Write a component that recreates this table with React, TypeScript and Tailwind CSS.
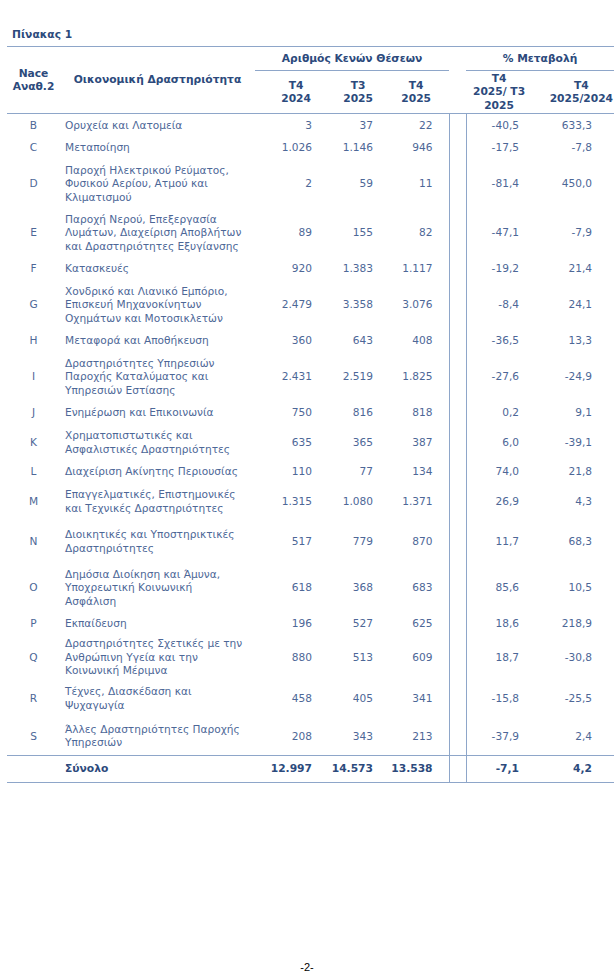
import React from "react";

type Row = {
  code: string;
  lines: string[];
  a: string;
  b: string;
  c: string;
  d: string;
  e: string;
  h: string;
};

const rows: Row[] = [
  { code: "B", lines: ["Ορυχεία και Λατομεία"], a: "3", b: "37", c: "22", d: "-40,5", e: "633,3", h: "h-[23px]" },
  { code: "C", lines: ["Μεταποίηση"], a: "1.026", b: "1.146", c: "946", d: "-17,5", e: "-7,8", h: "h-[23px]" },
  { code: "D", lines: ["Παροχή Ηλεκτρικού Ρεύματος,", "Φυσικού Αερίου, Ατμού και", "Κλιματισμού"], a: "2", b: "59", c: "11", d: "-81,4", e: "450,0", h: "h-[49px]" },
  { code: "E", lines: ["Παροχή Νερού, Επεξεργασία", "Λυμάτων, Διαχείριση Αποβλήτων", "και Δραστηριότητες Εξυγίανσης"], a: "89", b: "155", c: "82", d: "-47,1", e: "-7,9", h: "h-[49px]" },
  { code: "F", lines: ["Κατασκευές"], a: "920", b: "1.383", c: "1.117", d: "-19,2", e: "21,4", h: "h-[23px]" },
  { code: "G", lines: ["Χονδρικό και Λιανικό Εμπόριο,", "Επισκευή Μηχανοκίνητων", "Οχημάτων και Μοτοσικλετών"], a: "2.479", b: "3.358", c: "3.076", d: "-8,4", e: "24,1", h: "h-[49px]" },
  { code: "H", lines: ["Μεταφορά και Αποθήκευση"], a: "360", b: "643", c: "408", d: "-36,5", e: "13,3", h: "h-[23px]" },
  { code: "I", lines: ["Δραστηριότητες Υπηρεσιών", "Παροχής Καταλύματος και", "Υπηρεσιών Εστίασης"], a: "2.431", b: "2.519", c: "1.825", d: "-27,6", e: "-24,9", h: "h-[49px]" },
  { code: "J", lines: ["Ενημέρωση και Επικοινωνία"], a: "750", b: "816", c: "818", d: "0,2", e: "9,1", h: "h-[23px]" },
  { code: "K", lines: ["Χρηματοπιστωτικές και", "Ασφαλιστικές Δραστηριότητες"], a: "635", b: "365", c: "387", d: "6,0", e: "-39,1", h: "h-[36px]" },
  { code: "L", lines: ["Διαχείριση Ακίνητης Περιουσίας"], a: "110", b: "77", c: "134", d: "74,0", e: "21,8", h: "h-[23px]" },
  { code: "M", lines: ["Επαγγελματικές, Επιστημονικές", "και Τεχνικές Δραστηριότητες"], a: "1.315", b: "1.080", c: "1.371", d: "26,9", e: "4,3", h: "h-[36px]" },
  { code: "N", lines: ["Διοικητικές και Υποστηρικτικές", "Δραστηριότητες"], a: "517", b: "779", c: "870", d: "11,7", e: "68,3", h: "h-[44px]" },
  { code: "O", lines: ["Δημόσια Διοίκηση και Άμυνα,", "Υποχρεωτική Κοινωνική", "Ασφάλιση"], a: "618", b: "368", c: "683", d: "85,6", e: "10,5", h: "h-[49px]" },
  { code: "P", lines: ["Εκπαίδευση"], a: "196", b: "527", c: "625", d: "18,6", e: "218,9", h: "h-[23px]" },
  { code: "Q", lines: ["Δραστηριότητες Σχετικές με την", "Ανθρώπινη Υγεία και την", "Κοινωνική Μέριμνα"], a: "880", b: "513", c: "609", d: "18,7", e: "-30,8", h: "h-[44px]" },
  { code: "R", lines: ["Τέχνες, Διασκέδαση και", "Ψυχαγωγία"], a: "458", b: "405", c: "341", d: "-15,8", e: "-25,5", h: "h-[38px]" },
  { code: "S", lines: ["Άλλες Δραστηριότητες Παροχής", "Υπηρεσιών"], a: "208", b: "343", c: "213", d: "-37,9", e: "2,4", h: "h-[38px]" },
];

export default function App() {
  return (
    <div
      className="w-[614px] h-[980px] overflow-hidden bg-white flex flex-col text-[#4d6797]"
      style={{ fontFamily: '"DejaVu Sans", Verdana, sans-serif' }}
    >
      <div className="pt-[28px] pl-[12px] h-[46px] text-[10.7px] leading-[13px] font-bold text-[#2c4a7c]">
        Πίνακας 1
      </div>
      <div className="pl-[7px]">
        <table className="table-fixed border-collapse w-[607px] text-[10.6px] leading-[13.5px]">
          <colgroup>
            <col className="w-[53px]" />
            <col className="w-[195px]" />
            <col className="w-[61px]" />
            <col className="w-[61px]" />
            <col className="w-[72px]" />
            <col className="w-[17px]" />
            <col className="w-[66px]" />
            <col className="w-[82px]" />
          </colgroup>
          <thead className="font-bold text-[#2c4a7c] text-[10.7px]">
            <tr className="h-[24px] border-t border-[#8ea6c9]">
              <th rowSpan={2} className="p-0 align-middle text-center font-bold border-b border-[#8ea6c9]">
                Nace
                <br />
                Αναθ.2
              </th>
              <th rowSpan={2} className="p-0 align-middle text-center font-bold border-b border-[#8ea6c9]">
                Οικονομική Δραστηριότητα
              </th>
              <th colSpan={3} className="p-0 align-middle text-center font-bold border-b border-[#8ea6c9]">
                Αριθμός Κενών Θέσεων
              </th>
              <th rowSpan={2} className="p-0 border-b border-[#8ea6c9]"></th>
              <th colSpan={2} className="p-0 align-middle text-center font-bold border-b border-[#8ea6c9]">
                % Μεταβολή
              </th>
            </tr>
            <tr className="h-[43px] border-b border-[#8ea6c9]">
              <th className="p-0 pr-[5px] align-middle text-right font-bold">
                <div className="inline-block text-center">
                  T4
                  <br />
                  2024
                </div>
              </th>
              <th className="p-0 pr-[4px] align-middle text-right font-bold">
                <div className="inline-block text-center">
                  T3
                  <br />
                  2025
                </div>
              </th>
              <th className="p-0 pr-[18px] align-middle text-right font-bold">
                <div className="inline-block text-center">
                  T4
                  <br />
                  2025
                </div>
              </th>
              <th className="p-0 align-middle text-center font-bold whitespace-nowrap">
                T4
                <br />
                2025/ T3
                <br />
                2025
              </th>
              <th className="p-0 pr-[1px] align-middle text-right font-bold">
                <div className="inline-block text-center whitespace-nowrap">
                  T4
                  <br />
                  2025/2024
                </div>
              </th>
            </tr>
          </thead>
          <tbody>
            {rows.map((r) => (
              <tr key={r.code} className={r.h}>
                <td className="p-0 align-middle text-center">{r.code}</td>
                <td className="p-0 pl-[5px] align-middle whitespace-nowrap">
                  {r.lines.map((l, i) => (
                    <div key={i}>{l}</div>
                  ))}
                </td>
                <td className="p-0 pr-[4px] align-middle text-right">{r.a}</td>
                <td className="p-0 pr-[4px] align-middle text-right">{r.b}</td>
                <td className="p-0 pr-[16px] align-middle text-right">{r.c}</td>
                <td className="p-0 border-x border-[#8ea6c9]"></td>
                <td className="p-0 pr-[13px] align-middle text-right">{r.d}</td>
                <td className="p-0 pr-[22px] align-middle text-right">{r.e}</td>
              </tr>
            ))}
            <tr className="h-[27px] border-y border-[#8ea6c9] font-bold text-[#2c4a7c] text-[10.7px]">
              <td className="p-0"></td>
              <td className="p-0 pl-[5px] align-middle">Σύνολο</td>
              <td className="p-0 pr-[4px] align-middle text-right">12.997</td>
              <td className="p-0 pr-[4px] align-middle text-right">14.573</td>
              <td className="p-0 pr-[16px] align-middle text-right">13.538</td>
              <td className="p-0 border-x border-[#8ea6c9]"></td>
              <td className="p-0 pr-[13px] align-middle text-right">-7,1</td>
              <td className="p-0 pr-[22px] align-middle text-right">4,2</td>
            </tr>
          </tbody>
        </table>
      </div>
      <div className="mt-auto pb-[6px] text-center text-[11px] leading-[13px] text-black" style={{ fontFamily: '"Liberation Sans", Arial, sans-serif' }}>
        -2-
      </div>
    </div>
  );
}
